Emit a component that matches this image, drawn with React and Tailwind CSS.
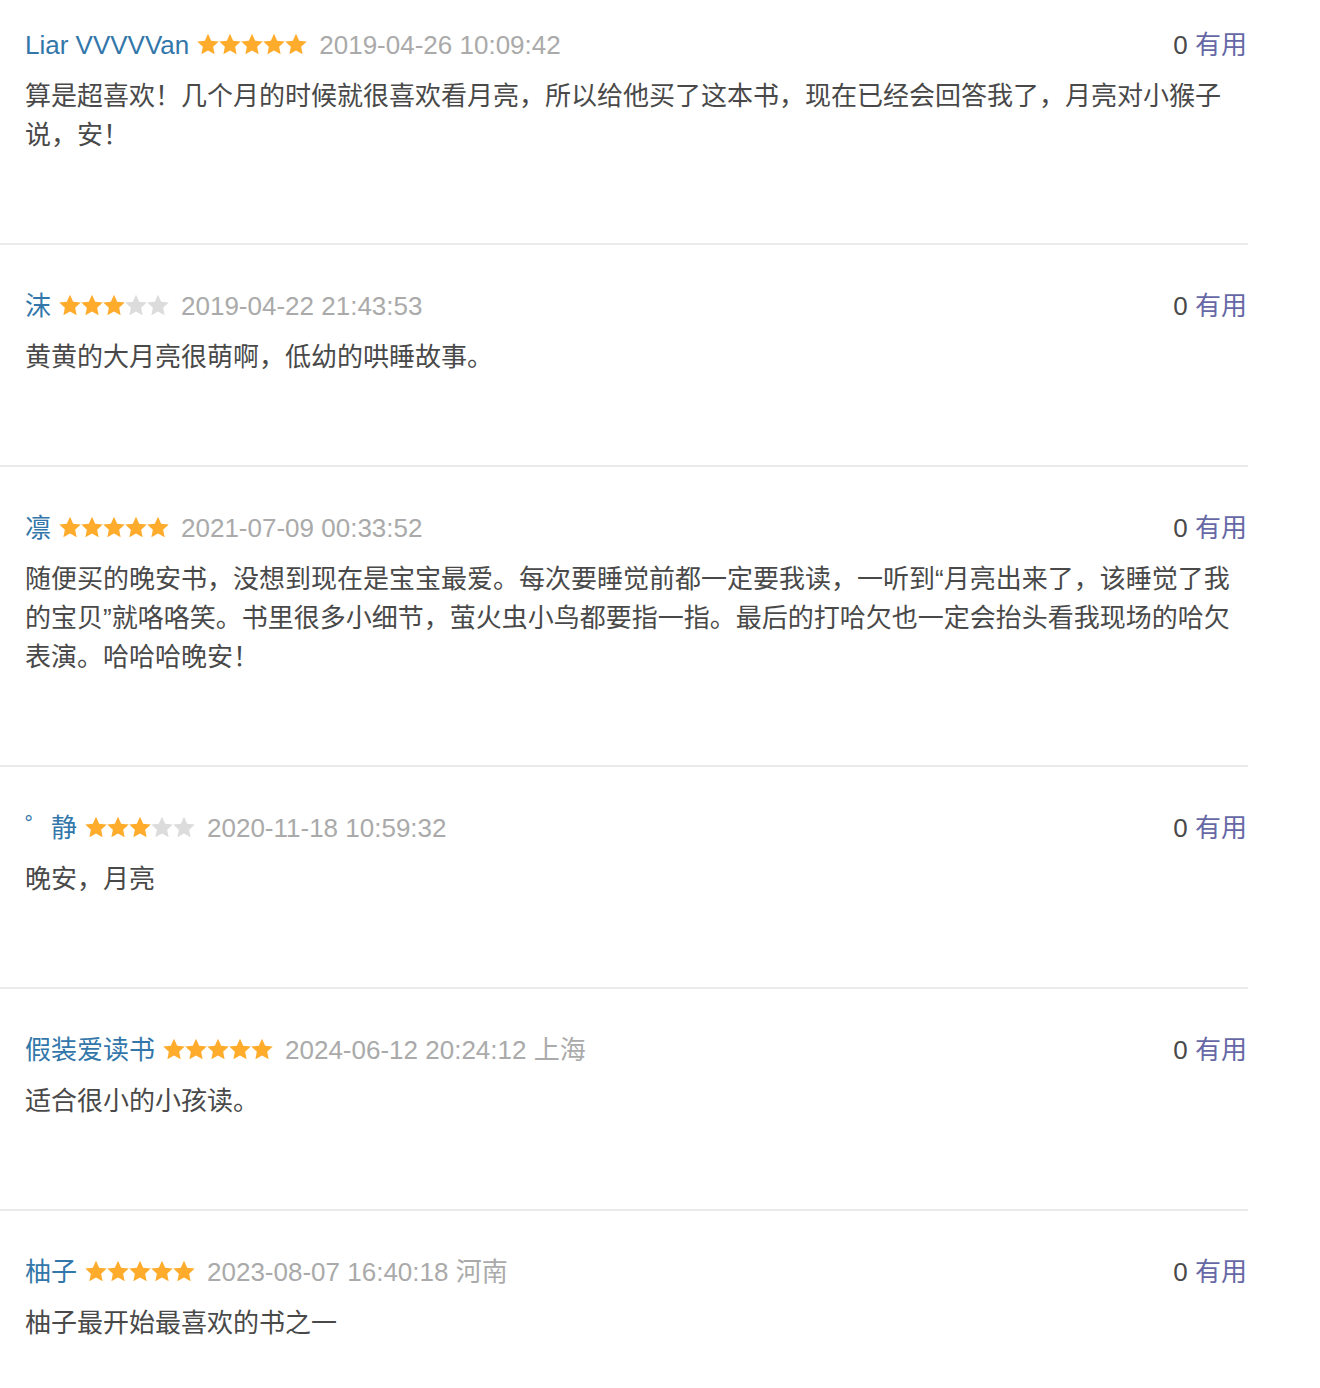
const reviews = [
  {
    name: 'Liar VVVVVan',
    rating: 5,
    time: '2019-04-26 10:09:42',
    text: '算是超喜欢！几个月的时候就很喜欢看月亮，所以给他买了这本书，现在已经会回答我了，月亮对小猴子说，安！',
  },
  {
    name: '沫',
    rating: 3,
    time: '2019-04-22 21:43:53',
    text: '黄黄的大月亮很萌啊，低幼的哄睡故事。',
  },
  {
    name: '凛',
    rating: 5,
    time: '2021-07-09 00:33:52',
    text: '随便买的晚安书，没想到现在是宝宝最爱。每次要睡觉前都一定要我读，一听到“月亮出来了，该睡觉了我的宝贝”就咯咯笑。书里很多小细节，萤火虫小鸟都要指一指。最后的打哈欠也一定会抬头看我现场的哈欠表演。哈哈哈晚安！',
  },
  {
    name: '゜静',
    rating: 3,
    time: '2020-11-18 10:59:32',
    text: '晚安，月亮',
  },
  {
    name: '假装爱读书',
    rating: 5,
    time: '2024-06-12 20:24:12',
    location: '上海',
    text: '适合很小的小孩读。',
  },
  {
    name: '柚子',
    rating: 5,
    time: '2023-08-07 16:40:18',
    location: '河南',
    text: '柚子最开始最喜欢的书之一',
  },
];

const Star = ({ filled }) => (
  <svg width="22" height="22" viewBox="0 0 22 22" className="block">
    <polygon
      points="11,0.7 14.17,7.63 21.75,8.51 16.14,13.67 17.64,21.14 11,17.4 4.36,21.14 5.86,13.67 0.25,8.51 7.83,7.63"
      fill={filled ? '#ffac2d' : '#dcdcdc'}
    />
  </svg>
);

const Stars = ({ rating }) => (
  <span className="mb-[4px] ml-[8px] flex items-center">
    {[1, 2, 3, 4, 5].map((i) => (
      <Star key={i} filled={i <= rating} />
    ))}
  </span>
);

const ReviewItem = ({ review, first }) => (
  <div
    className={`border-b-2 border-[#ebebeb] pl-[25px] pr-[1px] pb-[88px] ${first ? 'pt-[26px]' : 'pt-[42px]'}`}
  >
    <div className="flex h-[39px] items-center justify-between leading-[39px]">
      <div className="flex items-center">
        <span className="text-[#3377aa]">{review.name}</span>
        <Stars rating={review.rating} />
        <span className="ml-[12px] text-[#aaaaaa]">
          {review.time}
          {review.location && <span> {review.location}</span>}
        </span>
      </div>
      <div>
        <span className="text-[#494949]">0</span>{' '}
        <span className="text-[#6668a6]">有用</span>
      </div>
    </div>
    <p className="mt-[12px] w-[1220px] leading-[39px] text-[#494949]">{review.text}</p>
  </div>
);

export default function App() {
  return (
    <div className="min-h-screen bg-white font-['Liberation_Sans','Noto_Sans_CJK_SC',sans-serif] text-[26px]">
      <div className="w-[1248px]">
        {reviews.map((review, i) => (
          <ReviewItem key={i} review={review} first={i === 0} />
        ))}
      </div>
    </div>
  );
}
